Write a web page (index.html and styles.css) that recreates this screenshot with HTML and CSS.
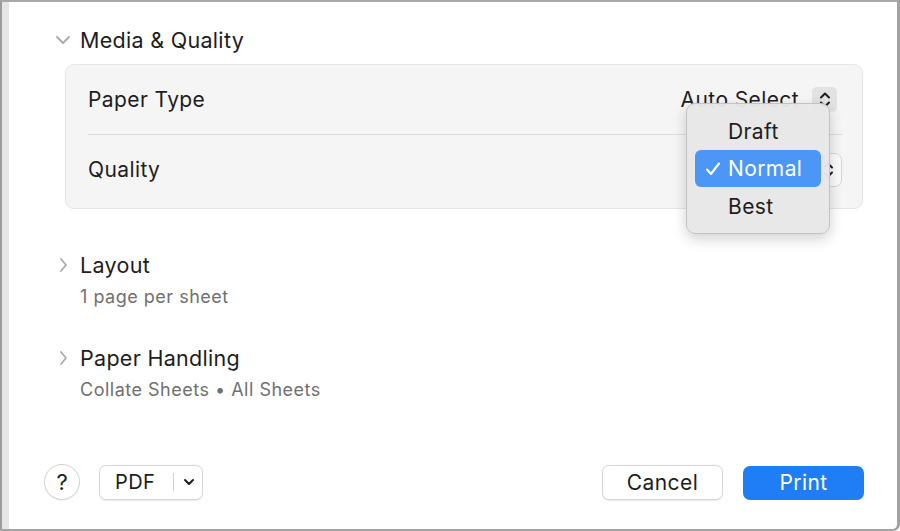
FILE: index.html
```html
<!DOCTYPE html>
<html>
<head>
<meta charset="utf-8">
<link rel="stylesheet" href="styles.css">
</head>
<body>
<div class="window">
  <div class="edge"></div>
  <div class="dialog">
    <div class="sec-head">
      <span class="chev"><svg width="16" height="10" viewBox="0 0 16 10"><path d="M2 2 L8 8 L14 2" fill="none" stroke="#a9a9a9" stroke-width="1.8" stroke-linecap="round" stroke-linejoin="round"/></svg></span>
      <span class="title">Media &amp; Quality</span>
    </div>
    <div class="group">
      <div class="row row1">
        <span class="label">Paper Type</span>
        <div class="ctrl">
          <span class="value">Auto Select</span>
          <span class="stepper"><svg width="14" height="20" viewBox="0 0 14 20"><path d="M3 7.5 L7 3.5 L11 7.5 M3 12.5 L7 16.5 L11 12.5" fill="none" stroke="#1d1d1d" stroke-width="2" stroke-linecap="round" stroke-linejoin="round"/></svg></span>
        </div>
      </div>
      <div class="sep"></div>
      <div class="row row2">
        <span class="label">Quality</span>
        <div class="popbtn">
          <span class="value">Normal</span>
          <svg width="14" height="20" viewBox="0 0 14 20"><path d="M3 7.5 L7 3.5 L11 7.5 M3 12.5 L7 16.5 L11 12.5" fill="none" stroke="#1d1d1d" stroke-width="2" stroke-linecap="round" stroke-linejoin="round"/></svg>
        </div>
      </div>
    </div>

    <div class="sec-head closed first">
      <span class="chev"><svg width="10" height="16" viewBox="0 0 10 16"><path d="M3 2 L8 8 L3 14" fill="none" stroke="#a9a9a9" stroke-width="1.8" stroke-linecap="round" stroke-linejoin="round"/></svg></span>
      <span class="title">Layout</span>
    </div>
    <div class="sub">1 page per sheet</div>

    <div class="sec-head closed second">
      <span class="chev"><svg width="10" height="16" viewBox="0 0 10 16"><path d="M3 2 L8 8 L3 14" fill="none" stroke="#a9a9a9" stroke-width="1.8" stroke-linecap="round" stroke-linejoin="round"/></svg></span>
      <span class="title">Paper Handling</span>
    </div>
    <div class="sub">Collate Sheets • All Sheets</div>

    <div class="footer">
      <div class="left">
        <button class="help">?</button>
        <div class="pdf">
          <span class="pdf-label">PDF</span>
          <span class="pdf-sep"></span>
          <svg width="14" height="10" viewBox="0 0 14 10"><path d="M3 3 L7 7 L11 3" fill="none" stroke="#1d1d1d" stroke-width="2" stroke-linecap="round" stroke-linejoin="round"/></svg>
        </div>
      </div>
      <div class="right">
        <button class="btn cancel">Cancel</button>
        <button class="btn print">Print</button>
      </div>
    </div>
  </div>

  <div class="menu">
    <div class="item">Draft</div>
    <div class="item selected"><svg class="check" width="18" height="18" viewBox="0 0 18 18"><path d="M3 9.5 L7 14 L15 3.5" fill="none" stroke="#ffffff" stroke-width="2.1" stroke-linecap="round" stroke-linejoin="round"/></svg>Normal</div>
    <div class="item">Best</div>
  </div>
</div>
</body>
</html>
```

FILE: styles.css
```css
html, body {
  margin: 0;
  padding: 0;
  background: #ffffff;
}

body {
  font-family: Inter, "Noto Sans", "Liberation Sans", sans-serif;
  color: #1d1d1d;
}

.window {
  position: relative;
  width: 900px;
  height: 531px;
  box-sizing: border-box;
  display: flex;
  border-top: 2px solid #a8a8a8;
  border-left: 2px solid #9c9c9c;
  border-right: 3px solid #a2a2a2;
  border-bottom: 2px solid #a2a2a2;
  border-bottom-right-radius: 7px;
  background: #ffffff;
  overflow: hidden;
}

.edge {
  width: 7px;
  background: #e6e6e6;
  flex: none;
}

.dialog {
  flex: 1;
  display: flex;
  flex-direction: column;
  padding: 23px 34px 29px 46px;
}

.sec-head {
  display: flex;
  align-items: center;
  height: 30px;
}

.chev {
  width: 25px;
  display: flex;
  align-items: center;
}

.sec-head.closed .chev {
  padding-left: 3px;
  width: 22px;
}

.title {
  font-size: 21.5px;
  letter-spacing: 0.3px;
  color: #1d1d1d;
}

.group {
  margin: 9px 0 0 10px;
  background: #f5f5f5;
  border: 1px solid #e6e6e6;
  border-radius: 9px;
  padding: 0 20px 0 22px;
}

.row {
  display: flex;
  align-items: center;
  justify-content: space-between;
}

.row1 {
  height: 69px;
}

.row2 {
  height: 69px;
  padding-bottom: 4px;
}

.label {
  font-size: 21px;
  letter-spacing: 0.4px;
}

.ctrl {
  display: flex;
  align-items: center;
  gap: 13px;
  margin-right: 5px;
}

.value {
  font-size: 21px;
  letter-spacing: 0.4px;
}

.stepper {
  width: 25px;
  height: 25px;
  border-radius: 5px;
  background: #e2e2e2;
  display: flex;
  align-items: center;
  justify-content: center;
}

.popbtn {
  height: 34px;
  width: 126px;
  box-sizing: border-box;
  border: 1px solid #d6d6d6;
  border-radius: 7px;
  background: #fbfbfb;
  display: flex;
  align-items: center;
  justify-content: space-between;
  padding: 0 6px 0 12px;
}

.sep {
  height: 1px;
  background: #dcdcdc;
}

.sec-head.first {
  margin-top: 41px;
}

.sec-head.second {
  margin-top: 35px;
}

.sub {
  margin: 6px 0 0 25px;
  height: 22px;
  line-height: 22px;
  font-size: 18px;
  letter-spacing: 0.5px;
  color: #707070;
}

.footer {
  margin-top: auto;
  margin-left: -11px;
  margin-right: -1px;
  display: flex;
  justify-content: space-between;
  align-items: center;
}

.left, .right {
  display: flex;
  align-items: center;
}

.left {
  gap: 19px;
}

.right {
  gap: 20px;
}

button {
  font-family: inherit;
  margin: 0;
  padding: 0;
}

.help {
  width: 36px;
  height: 36px;
  border-radius: 50%;
  border: 1px solid #d3d3d3;
  background: #ffffff;
  font-size: 22px;
  color: #1d1d1d;
  box-shadow: 0 0.5px 1px rgba(0, 0, 0, 0.08);
}

.pdf {
  width: 104px;
  height: 35px;
  box-sizing: border-box;
  border: 1px solid #d6d6d6;
  border-radius: 7px;
  background: #ffffff;
  display: flex;
  align-items: center;
  padding: 0 0 0 15px;
  box-shadow: 0 0.5px 1px rgba(0, 0, 0, 0.08);
}

.pdf-label {
  font-size: 20px;
  letter-spacing: 0.4px;
  width: 58px;
}

.pdf-sep {
  width: 1px;
  height: 18px;
  background: #d0d0d0;
  margin-right: 8px;
}

.btn {
  width: 121px;
  height: 35px;
  border-radius: 7px;
  font-size: 21px;
  letter-spacing: 0.4px;
}

.cancel {
  border: 1px solid #d6d6d6;
  background: #ffffff;
  color: #1d1d1d;
  box-shadow: 0 0.5px 1px rgba(0, 0, 0, 0.08);
}

.print {
  border: none;
  background: #1f7ef5;
  color: #ffffff;
  height: 34px;
  margin-top: 1px;
}

.menu {
  position: absolute;
  left: 684px;
  top: 101px;
  width: 144px;
  height: 131px;
  box-sizing: border-box;
  background: rgba(231, 231, 231, 0.97);
  border: 1px solid #c2c2c2;
  border-radius: 9px;
  box-shadow: 0 5px 14px rgba(0, 0, 0, 0.18);
  padding: 8px 8px;
  display: flex;
  flex-direction: column;
}

.item {
  height: 38px;
  flex: none;
  display: flex;
  align-items: center;
  padding-left: 33px;
  font-size: 21px;
  letter-spacing: 0.4px;
  color: #1d1d1d;
  border-radius: 6px;
  position: relative;
}

.item.selected {
  background: #4c97f6;
  color: #ffffff;
  height: 37px;
}

.check {
  position: absolute;
  left: 9px;
  top: 10px;
}
```
